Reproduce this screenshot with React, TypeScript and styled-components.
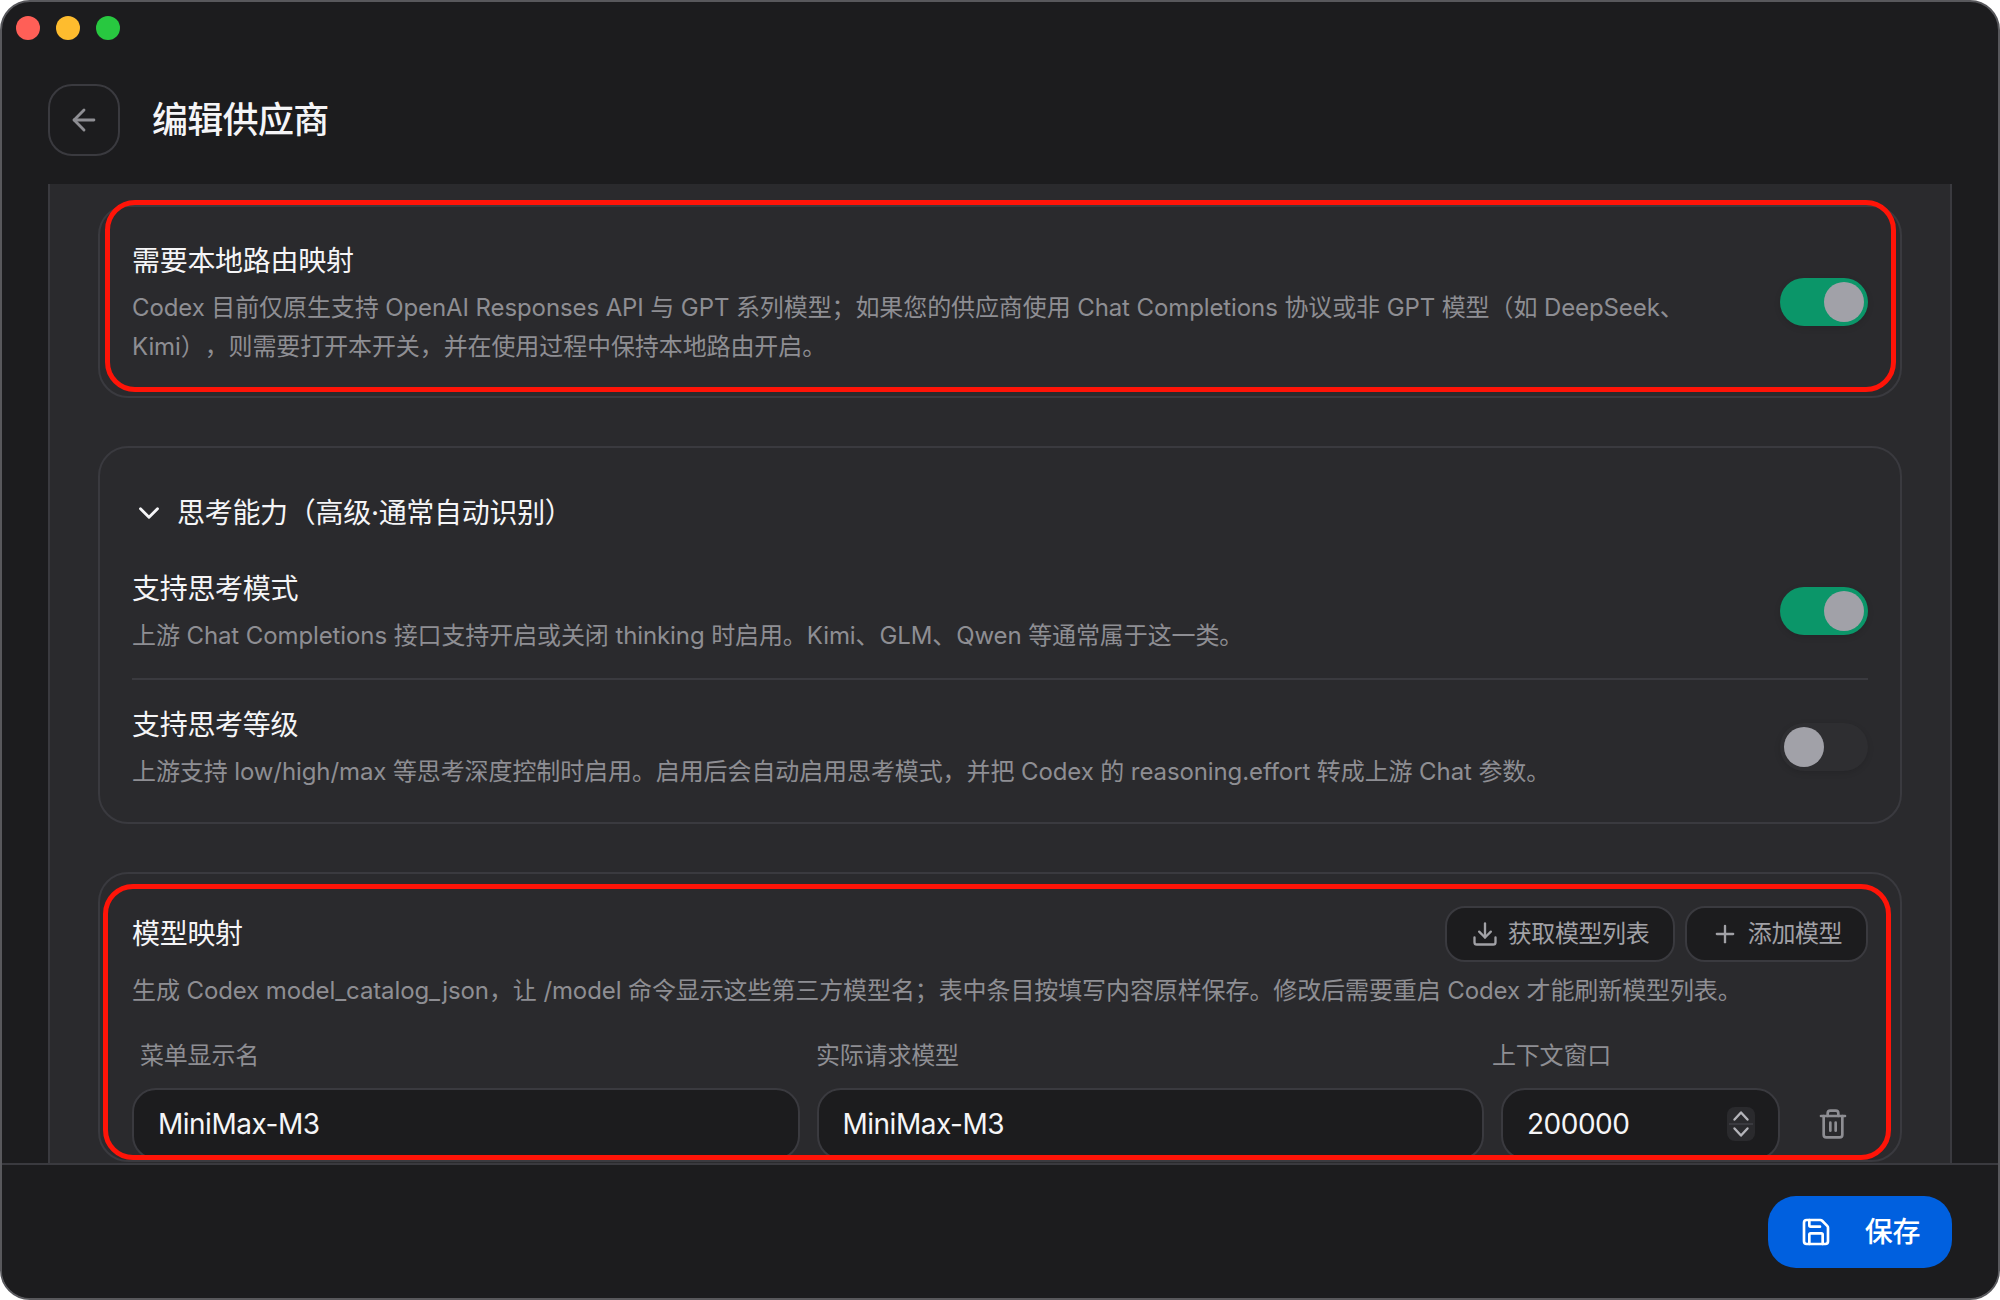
import React from "react";
import styled, { createGlobalStyle } from "styled-components";
import { ArrowLeft, ChevronDown, Download, Plus, Save, Trash2 } from "lucide-react";

const Global = createGlobalStyle`
  html, body { margin: 0; padding: 0; background: #ffffff; }
  * { box-sizing: border-box; }
  body {
    font-family: Inter, "Noto Sans CJK SC", sans-serif;
    -webkit-font-smoothing: antialiased;
    text-spacing-trim: space-all;
  }
`;

const Frame = styled.div`
  width: 2000px;
  height: 1300px;
  display: flex;
  flex-direction: column;
  background: #1c1c1e;
  border: 2px solid #58585c;
  border-radius: 30px;
  overflow: hidden;
`;

const Header = styled.header`
  flex: none;
  height: 182px;
  display: flex;
  flex-direction: column;
`;

const Lights = styled.div`
  display: flex;
  gap: 16px;
  padding: 14px 0 0 14px;
`;

const Light = styled.span<{ $color: string }>`
  width: 24px;
  height: 24px;
  border-radius: 50%;
  background: ${(p) => p.$color};
`;

const TitleRow = styled.div`
  display: flex;
  align-items: center;
  gap: 32px;
  margin: 44px 0 0 46px;
`;

const BackButton = styled.button`
  width: 72px;
  height: 72px;
  padding: 0;
  display: flex;
  align-items: center;
  justify-content: center;
  background: transparent;
  border: 2px solid #3a3a3f;
  border-radius: 24px;
  color: #8e8e93;
`;

const Title = styled.h1`
  margin: 0;
  font-size: 36px;
  line-height: 48px;
  font-weight: 500;
  letter-spacing: -0.7px;
  color: #f5f5f7;
`;

const Panel = styled.main`
  flex: 1;
  min-height: 0;
  margin: 0 46px;
  padding: 21px 48px 0;
  display: flex;
  flex-direction: column;
  gap: 48px;
  background: #2a2a2d;
  border-left: 2px solid #3a3a3f;
  border-right: 2px solid #3a3a3f;
  overflow: hidden;
`;

const Card = styled.section`
  position: relative;
  flex: none;
  border: 2px solid #3a3a3f;
  border-radius: 30px;
`;

const RouteCard = styled(Card)`
  padding: 33px 32px 30px;
`;

const ThinkingCard = styled(Card)`
  padding: 44px 32px 31px;
`;

const MappingCard = styled(Card)`
  padding: 32px 32px 0;
`;

const Annotation = styled.div<{ $top: number; $left: number; $right: number; $height: number }>`
  position: absolute;
  top: ${(p) => p.$top}px;
  left: ${(p) => p.$left}px;
  right: ${(p) => p.$right}px;
  height: ${(p) => p.$height}px;
  border: 5px solid #ff1408;
  border-radius: 30px;
  pointer-events: none;
`;

const Row = styled.div`
  display: flex;
  align-items: center;
  justify-content: space-between;
  gap: 48px;
`;

const RowText = styled.div`
  flex: 1;
  min-width: 0;
`;

const Label = styled.div`
  font-size: 28px;
  line-height: 42px;
  font-weight: 400;
  letter-spacing: -0.3px;
  color: #f5f5f7;
`;

const Desc = styled.p`
  margin: 6px 0 0;
  font-size: 24px;
  line-height: 39px;
  letter-spacing: -0.1px;
  color: #8e8e93;
`;

const Track = styled.div<{ $on: boolean }>`
  flex: none;
  width: 88px;
  height: 48px;
  margin-bottom: 2px;
  padding: 4px;
  display: flex;
  justify-content: ${(p) => (p.$on ? "flex-end" : "flex-start")};
  border-radius: 24px;
  background: ${(p) => (p.$on ? "#0b9669" : "#2e2e31")};
  box-shadow: 0 2px 6px rgba(0, 0, 0, 0.12);
`;

const Knob = styled.span`
  width: 40px;
  height: 40px;
  border-radius: 50%;
  background: #a1a1a8;
`;

const Toggle = ({ on }: { on: boolean }) => (
  <Track $on={on}>
    <Knob />
  </Track>
);

const Collapse = styled.div`
  display: flex;
  align-items: center;
  gap: 11px;
  margin: 0 0 34px;
  color: #f5f5f7;
`;

const CollapseTitle = styled.div`
  font-size: 28px;
  line-height: 42px;
  font-weight: 400;
  letter-spacing: -0.3px;
  color: #f5f5f7;
`;

const ThinkRow = styled(Row)<{ $first?: boolean }>`
  padding: ${(p) => (p.$first ? "0 0 23px" : "24px 0 0")};
  border-bottom: ${(p) => (p.$first ? "2px solid #3a3a3f" : "none")};
`;

const MapHead = styled.div`
  display: flex;
  align-items: center;
  justify-content: space-between;
`;

const Buttons = styled.div`
  display: flex;
  gap: 10px;
`;

const GhostButton = styled.button<{ $width: number }>`
  width: ${(p) => p.$width}px;
  height: 56px;
  display: flex;
  align-items: center;
  justify-content: center;
  gap: 9px;
  padding: 0;
  background: #1c1c1e;
  border: 2px solid #3a3a3f;
  border-radius: 20px;
  color: #a1a1a6;
  font: 400 24px/32px Inter, "Noto Sans CJK SC", sans-serif;
  letter-spacing: -0.4px;
`;

const MapDesc = styled(Desc)`
  margin: 9px 0 0;
`;

const ColumnLabels = styled.div`
  display: grid;
  grid-template-columns: 676px 676px 1fr;
  margin-top: 28px;
  padding-left: 8px;
`;

const ColumnLabel = styled.div`
  font-size: 24px;
  line-height: 36px;
  letter-spacing: -0.2px;
  color: #8e8e93;
`;

const FieldRow = styled.div`
  display: grid;
  grid-template-columns: 667.5px 667.5px 279px 72px;
  column-gap: 17px;
  margin-top: 14px;
`;

const Field = styled.div`
  height: 72px;
  display: flex;
  align-items: center;
  justify-content: space-between;
  padding: 0 22px 0 24px;
  background: #1c1c1e;
  border: 2px solid #3a3a3f;
  border-radius: 24px;
  font-size: 28px;
  line-height: 36px;
  letter-spacing: -0.5px;
  color: #f5f5f7;
`;

const SpinnerBox = styled.svg`
  flex: none;
  display: block;
  margin-right: 1px;
`;

const Spinner = () => (
  <SpinnerBox width="28" height="34" viewBox="0 0 28 34" fill="none">
    <rect width="28" height="34" rx="8" fill="#2a2a2d" />
    <path d="M2 17h24" stroke="#3a3a3f" strokeWidth="2" />
    <path d="M7.5 12.5 14 5.5l6.5 7" stroke="#b4b4b9" strokeWidth="2.4" strokeLinecap="round" strokeLinejoin="round" />
    <path d="M7.5 21.5 14 28.5l6.5-7" stroke="#b4b4b9" strokeWidth="2.4" strokeLinecap="round" strokeLinejoin="round" />
  </SpinnerBox>
);

const DeleteButton = styled.button`
  height: 72px;
  display: flex;
  align-items: center;
  justify-content: center;
  padding: 0;
  background: transparent;
  border: none;
  color: #8e8e93;
`;

const Footer = styled.footer`
  flex: none;
  height: 135px;
  display: flex;
  align-items: flex-start;
  justify-content: flex-end;
  padding: 31px 46px 0 0;
  background: #1c1c1e;
  border-top: 2px solid #3a3a3f;
`;

const SaveButton = styled.button`
  width: 184px;
  height: 72px;
  display: flex;
  align-items: center;
  justify-content: center;
  gap: 33px;
  padding: 0;
  background: #0060df;
  border: none;
  border-radius: 28px;
  color: #ffffff;
  font: 500 28px/36px Inter, "Noto Sans CJK SC", sans-serif;
  letter-spacing: -0.3px;
`;

export default function App() {
  return (
    <>
      <Global />
      <Frame>
        <Header>
          <Lights>
            <Light $color="#ff5f57" />
            <Light $color="#febc2e" />
            <Light $color="#28c840" />
          </Lights>
          <TitleRow>
            <BackButton aria-label="返回">
              <ArrowLeft size={34} strokeWidth={2} />
            </BackButton>
            <Title>编辑供应商</Title>
          </TitleRow>
        </Header>
        <Panel>
          <RouteCard>
            <Row>
              <RowText>
                <Label>需要本地路由映射</Label>
                <Desc>
                  Codex 目前仅原生支持 OpenAI Responses API 与 GPT 系列模型；如果您的供应商使用 Chat Completions 协议或非 GPT 模型（如 DeepSeek、Kimi），则需要打开本开关，并在使用过程中保持本地路由开启。
                </Desc>
              </RowText>
              <Toggle on />
            </Row>
            <Annotation $top={-7} $left={5} $right={4} $height={192} />
          </RouteCard>
          <ThinkingCard>
            <Collapse>
              <ChevronDown size={34} strokeWidth={2} />
              <CollapseTitle>思考能力（高级·通常自动识别）</CollapseTitle>
            </Collapse>
            <ThinkRow $first>
              <RowText>
                <Label>支持思考模式</Label>
                <Desc>上游 Chat Completions 接口支持开启或关闭 thinking 时启用。Kimi、GLM、Qwen 等通常属于这一类。</Desc>
              </RowText>
              <Toggle on />
            </ThinkRow>
            <ThinkRow>
              <RowText>
                <Label>支持思考等级</Label>
                <Desc>上游支持 low/high/max 等思考深度控制时启用。启用后会自动启用思考模式，并把 Codex 的 reasoning.effort 转成上游 Chat 参数。</Desc>
              </RowText>
              <Toggle on={false} />
            </ThinkRow>
          </ThinkingCard>
          <MappingCard>
            <MapHead>
              <Label>模型映射</Label>
              <Buttons>
                <GhostButton $width={230}>
                  <Download size={28} strokeWidth={2} />
                  获取模型列表
                </GhostButton>
                <GhostButton $width={183}>
                  <Plus size={28} strokeWidth={2} />
                  添加模型
                </GhostButton>
              </Buttons>
            </MapHead>
            <MapDesc>
              生成 Codex model_catalog_json，让 /model 命令显示这些第三方模型名；表中条目按填写内容原样保存。修改后需要重启 Codex 才能刷新模型列表。
            </MapDesc>
            <ColumnLabels>
              <ColumnLabel>菜单显示名</ColumnLabel>
              <ColumnLabel>实际请求模型</ColumnLabel>
              <ColumnLabel>上下文窗口</ColumnLabel>
            </ColumnLabels>
            <FieldRow>
              <Field>MiniMax-M3</Field>
              <Field>MiniMax-M3</Field>
              <Field>
                200000
                <Spinner />
              </Field>
              <DeleteButton aria-label="删除">
                <Trash2 size={32} strokeWidth={2} />
              </DeleteButton>
            </FieldRow>
            <Annotation $top={10} $left={3} $right={9} $height={276} />
          </MappingCard>
        </Panel>
        <Footer>
          <SaveButton>
            <Save size={32} strokeWidth={2} />
            保存
          </SaveButton>
        </Footer>
      </Frame>
    </>
  );
}
